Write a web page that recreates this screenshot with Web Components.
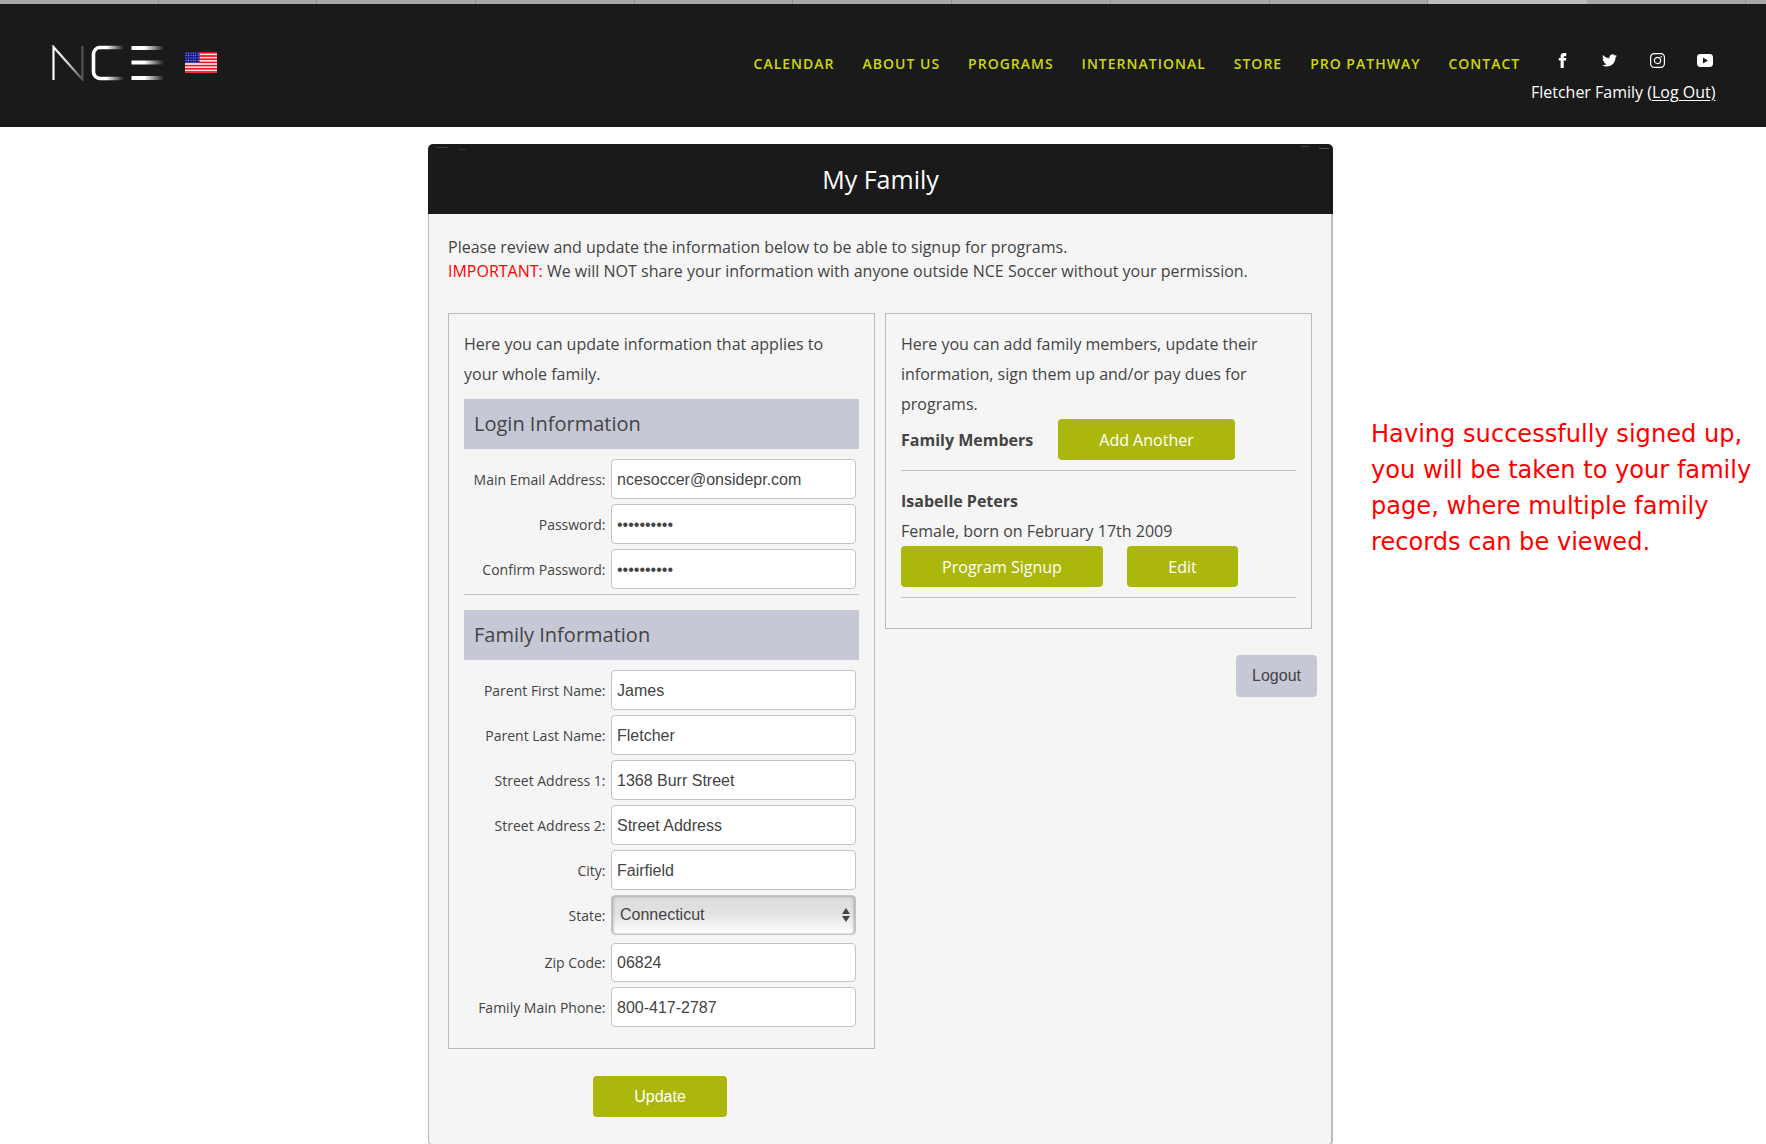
<!DOCTYPE html>
<html lang="en">
<head>
<meta charset="utf-8">
<title>My Family</title>
<style>
    html, body { margin: 0; padding: 0; background: #fff; overflow: hidden; height: 1144px; }
    body { font-family: "Open Sans", "Liberation Sans", sans-serif; color: #444; }
    span b { font-weight: 400; color: #f00; }
</style>
</head>
<body>
<tab-strip></tab-strip>
<site-header>
    <nav-link>CALENDAR</nav-link>
    <nav-link>ABOUT US</nav-link>
    <nav-link>PROGRAMS</nav-link>
    <nav-link>INTERNATIONAL</nav-link>
    <nav-link>STORE</nav-link>
    <nav-link>PRO PATHWAY</nav-link>
    <nav-link>CONTACT</nav-link>
</site-header>
<page-body>
    <family-panel title="My Family">
        <span slot="intro">Please review and update the information below to be able to signup for programs.<br><b>IMPORTANT:</b> We will NOT share your information with anyone outside NCE Soccer without your permission.</span>
        <info-box slot="left">
            <box-text>Here you can update information that applies to your whole family.</box-text>
            <section-title>Login Information</section-title>
            <form-row label="Main Email Address:">ncesoccer@onsidepr.com</form-row>
            <form-row label="Password:">••••••••••</form-row>
            <form-row label="Confirm Password:">••••••••••</form-row>
            <box-rule tight></box-rule>
            <section-title second>Family Information</section-title>
            <form-row label="Parent First Name:">James</form-row>
            <form-row label="Parent Last Name:">Fletcher</form-row>
            <form-row label="Street Address 1:">1368 Burr Street</form-row>
            <form-row label="Street Address 2:">Street Address</form-row>
            <form-row label="City:">Fairfield</form-row>
            <form-row label="State:" select>Connecticut</form-row>
            <form-row label="Zip Code:" short>06824</form-row>
            <form-row label="Family Main Phone:" last>800-417-2787</form-row>
        </info-box>
        <action-button slot="left-action" sans>Update</action-button>
        <info-box slot="right" members>
            <box-text>Here you can add family members, update their information, sign them up and/or pay dues for programs.</box-text>
            <member-row>
                <strong slot="name">Family Members</strong>
                <action-button style="width:177px;margin-left:25px">Add Another</action-button>
            </member-row>
            <box-rule></box-rule>
            <member-card name="Isabelle Peters" details="Female, born on February 17th 2009">
                <action-button style="width:202px">Program Signup</action-button>
                <action-button style="width:111px;margin-left:24px">Edit</action-button>
            </member-card>
            <box-rule></box-rule>
        </info-box>
        <action-button slot="right-action" grey sans>Logout</action-button>
    </family-panel>
    <side-note>Having successfully signed up, you will be taken to your family page, where multiple family records can be viewed.</side-note>
</page-body>

<script>
class TabStrip extends HTMLElement {
    constructor() {
        super();
        this.attachShadow({ mode: 'open' });
        const tabs = Array.from({ length: 11 }, (_, i) => `<i class="${i === 9 ? 'on' : ''}"></i>`).join('');
        this.shadowRoot.innerHTML = `
            <style>
                :host { display: flex; height: 4px; background: #a8a8a8; overflow: hidden; }
                i { flex: 0 0 158.7px; box-sizing: border-box; border-right: 1px solid #8e8e8e; }
                i:first-child { flex-basis: 154.3px; }
                i.on { background: #bdbdbd; border-right: 0; }
            </style>
            ${tabs}
        `;
    }
}

class SiteHeader extends HTMLElement {
    constructor() {
        super();
        this.attachShadow({ mode: 'open' });
        this.shadowRoot.innerHTML = `
            <style>
                :host { display: flex; justify-content: space-between; box-sizing: border-box; height: 123px; padding: 40px 37px 0 52px; background: #1a1a1a; color: #fff; }
                .brand { display: flex; align-items: flex-start; gap: 20px; padding-top: 1px; }
                .flag { margin-top: 7px; }
                .right { display: flex; flex-direction: column; align-items: flex-end; }
                .top { display: flex; height: 32px; align-items: center; }
                nav { display: flex; gap: 28px; padding-top: 8px; margin-right: 18px; }
                .social { display: flex; }
                .social span { display: flex; width: 47.7px; height: 32px; align-items: center; justify-content: center; }
                svg { display: block; }
                .user { margin: 4px 13.5px 0 0; font-size: 16px; line-height: 24px; }
                u { text-underline-offset: 2px; }
            </style>
            <div class="brand">
                <svg width="113" height="36" viewBox="0 0 113 36" role="img" aria-label="NCE logo">
                    <defs>
                        <linearGradient id="n" gradientUnits="userSpaceOnUse" x1="0" x2="32" y1="0" y2="0">
                            <stop offset="0" stop-color="#fff"/><stop offset="0.45" stop-color="#ddd"/><stop offset="1" stop-color="#444"/>
                        </linearGradient>
                        <linearGradient id="c" gradientUnits="userSpaceOnUse" x1="40" x2="72" y1="0" y2="0">
                            <stop offset="0.45" stop-color="#fff"/><stop offset="1" stop-color="#fff" stop-opacity="0"/>
                        </linearGradient>
                        <linearGradient id="e" gradientUnits="userSpaceOnUse" x1="79" x2="112" y1="0" y2="0">
                            <stop offset="0.4" stop-color="#fff"/><stop offset="1" stop-color="#fff" stop-opacity="0"/>
                        </linearGradient>
                    </defs>
                    <path d="M1.5 35V2L30.5 34.5V1" fill="none" stroke="url(#n)" stroke-width="2.2"/>
                    <path d="M72 2.5H48a6.5 6.5 0 0 0-6.5 6.5V27a6.5 6.5 0 0 0 6.5 6.5H72" fill="none" stroke="url(#c)" stroke-width="3.6"/>
                    <rect x="79.5" y="1" width="32.5" height="4" fill="url(#e)"/>
                    <rect x="79.5" y="15.5" width="32.5" height="4" fill="url(#e)"/>
                    <rect x="79.5" y="31" width="32.5" height="4" fill="url(#e)"/>
                </svg>
                <svg class="flag" width="32" height="21" viewBox="0 0 32 21" role="img" aria-label="United States flag">
                    <defs>
                        <pattern id="st" width="32" height="3.2" patternUnits="userSpaceOnUse">
                            <rect width="32" height="1.6" fill="#f01028"/><rect y="1.6" width="32" height="1.6" fill="#ffdfe2"/>
                        </pattern>
                        <pattern id="stars" width="2.4" height="2.4" patternUnits="userSpaceOnUse">
                            <rect width="1.1" height="1.1" x="0.6" y="0.6" fill="#aab0e8"/>
                        </pattern>
                    </defs>
                    <rect width="32" height="21" fill="url(#st)"/>
                    <rect width="14.5" height="11" fill="#10107e"/>
                    <rect width="14.5" height="11" fill="url(#stars)"/>
                </svg>
            </div>
            <div class="right">
                <div class="top">
                    <nav><slot></slot></nav>
                    <div class="social">
                        <span><svg width="15" height="15" viewBox="0 0 24 24" fill="#fff"><path d="M9 8H6v4h3v12h5V12h3.642L18 8h-4V6.333C14 5.378 14.192 5 15.115 5H18V0h-3.808C10.596 0 9 1.583 9 4.615V8z"/></svg></span>
                        <span><svg width="15" height="15" viewBox="0 0 24 24" fill="#fff"><path d="M23.953 4.57a10 10 0 01-2.825.775 4.958 4.958 0 002.163-2.723c-.951.555-2.005.959-3.127 1.184a4.92 4.92 0 00-8.384 4.482C7.69 8.095 4.067 6.13 1.64 3.162a4.822 4.822 0 00-.666 2.475c0 1.71.87 3.213 2.188 4.096a4.904 4.904 0 01-2.228-.616v.06a4.923 4.923 0 003.946 4.827 4.996 4.996 0 01-2.212.085 4.936 4.936 0 004.604 3.417 9.867 9.867 0 01-6.102 2.105c-.39 0-.779-.023-1.17-.067a13.995 13.995 0 007.557 2.209c9.053 0 13.998-7.496 13.998-13.985 0-.21 0-.42-.015-.63A9.935 9.935 0 0024 4.59z"/></svg></span>
                        <span><svg width="15" height="15" viewBox="0 0 15 15" fill="none" stroke="#fff"><rect x="0.6" y="0.6" width="13.8" height="13.8" rx="3.6" stroke-width="1.2"/><circle cx="7.5" cy="7.5" r="3.1" stroke-width="1.2"/><circle cx="11.3" cy="3.7" r="0.8" fill="#fff" stroke="none"/></svg></span>
                        <span><svg width="16" height="13" viewBox="0 0 16 13"><rect width="16" height="13" rx="3.4" fill="#fff"/><path d="M6 3.4V9.6L11 6.5z" fill="#1a1a1a"/></svg></span>
                    </div>
                </div>
                <div class="user">Fletcher Family (<u>Log Out)</u></div>
            </div>
        `;
    }
}

class NavLink extends HTMLElement {
    constructor() {
        super();
        this.attachShadow({ mode: 'open' });
        this.shadowRoot.innerHTML = `
            <style>
                :host { display: block; font-size: 14px; font-weight: 600; letter-spacing: 1px; line-height: 20px; color: #ccd80f; white-space: nowrap; }
            </style>
            <slot></slot>
        `;
    }
}

class PageBody extends HTMLElement {
    constructor() {
        super();
        this.attachShadow({ mode: 'open' });
        this.shadowRoot.innerHTML = `
            <style>
                :host { display: flex; align-items: flex-start; padding: 17px 0 0 428px; }
            </style>
            <slot></slot>
        `;
    }
}

class FamilyPanel extends HTMLElement {
    constructor() {
        super();
        this.attachShadow({ mode: 'open' });
        this.shadowRoot.innerHTML = `
            <style>
                :host { display: block; flex: 0 0 905px; width: 905px; }
                h1 {
                    margin: 0; height: 70px; border-radius: 5px 5px 0 0; color: #fff; font-size: 25px; font-weight: 400; line-height: 70px; text-align: center;
                    background:
                        linear-gradient(#3a3a3a, #3a3a3a) 8px 3px / 12px 1px no-repeat,
                        linear-gradient(#333, #333) 30px 5px / 8px 1px no-repeat,
                        linear-gradient(#555, #555) right 4px top 4px / 10px 1px no-repeat,
                        linear-gradient(#444, #444) right 24px top 2px / 8px 1px no-repeat,
                        #1a1a1a;
                }
                .main { box-sizing: border-box; background: #f5f5f5; border: solid #bbb; border-width: 0 2px 2px 1px; border-radius: 0 0 5px 5px; }
                .intro { padding: 21px 19px 0; font-size: 16px; line-height: 24px; color: #444; }
                ::slotted(span) { display: block; }
                .cols { display: grid; grid-template-columns: 427px 427px; gap: 10px; padding: 30px 0 27px 19px; }
                .col { display: flex; flex-direction: column; }
                .left-action { display: flex; justify-content: center; margin: 27px 0 0 -3px; }
                .right-action { display: flex; justify-content: flex-end; margin: 26px -5px 0 0; }
            </style>
            <h1></h1>
            <div class="main">
                <div class="intro"><slot name="intro"></slot></div>
                <div class="cols">
                    <div class="col">
                        <slot name="left"></slot>
                        <div class="left-action"><slot name="left-action"></slot></div>
                    </div>
                    <div class="col">
                        <slot name="right"></slot>
                        <div class="right-action"><slot name="right-action"></slot></div>
                    </div>
                </div>
            </div>
        `;
        this.shadowRoot.querySelector('h1').textContent = this.getAttribute('title');
    }
}

class InfoBox extends HTMLElement {
    constructor() {
        super();
        this.attachShadow({ mode: 'open' });
        this.shadowRoot.innerHTML = `
            <style>
                :host { display: block; box-sizing: border-box; padding: 15px 15px 21px; border: 1px solid #bbb; }
                :host([members]) { padding-bottom: 30px; }
            </style>
            <slot></slot>
        `;
    }
}

class BoxText extends HTMLElement {
    constructor() {
        super();
        this.attachShadow({ mode: 'open' });
        this.shadowRoot.innerHTML = `
            <style>
                :host { display: block; font-size: 16px; line-height: 30px; color: #444; }
            </style>
            <slot></slot>
        `;
    }
}

class SectionTitle extends HTMLElement {
    constructor() {
        super();
        this.attachShadow({ mode: 'open' });
        this.shadowRoot.innerHTML = `
            <style>
                :host { display: block; height: 50px; margin: 10px 0; padding-left: 10px; background: #c6c8d6; font-size: 20px; line-height: 50px; color: #444; }
                :host([second]) { margin-top: 15px; }
            </style>
            <slot></slot>
        `;
    }
}

class FormRow extends HTMLElement {
    constructor() {
        super();
        this.attachShadow({ mode: 'open' });
        this.shadowRoot.innerHTML = `
            <style>
                :host { display: flex; align-items: center; margin-bottom: 5px; }
                :host([select]) { margin-bottom: 8px; }
                :host([last]) { margin-bottom: 0; }
                label { flex: 0 0 146.5px; padding-right: 5px; box-sizing: border-box; text-align: right; font-size: 14px; color: #444; white-space: nowrap; }
                .box { box-sizing: border-box; width: 245px; height: 40px; padding: 0 5.5px; border: 1px solid #c4c4c4; border-radius: 4px; background: #fff; font: 16px/39px "Liberation Sans", Arial, sans-serif; color: #444; }
                :host([short]) .box { height: 39px; line-height: 38px; }
                :host([select]) .box { position: relative; padding-left: 8.5px; line-height: 38px; background: linear-gradient(#dcdcdc, #e2e2e2 45%, #fff); box-shadow: inset 2px 0 3px -1px #aaa, inset -2px 0 3px -1px #aaa, inset 0 1px 2px #bbb; }
                .arrows { position: absolute; right: 5px; top: 12px; display: none; }
                :host([select]) .arrows { display: block; }
            </style>
            <label></label>
            <div class="box"><slot></slot><svg class="arrows" width="8" height="14" viewBox="0 0 8 14" fill="#444"><path d="M4 0L8 6H0zM4 14L0 8H8z"/></svg></div>
        `;
        this.shadowRoot.querySelector('label').textContent = this.getAttribute('label');
    }
}

class BoxRule extends HTMLElement {
    constructor() {
        super();
        this.attachShadow({ mode: 'open' });
        this.shadowRoot.innerHTML = `
            <style>
                :host { display: block; height: 1px; margin-top: 10px; background: #c4c4c4; }
                :host([tight]) { margin-top: 0; }
            </style>
        `;
    }
}

class MemberRow extends HTMLElement {
    constructor() {
        super();
        this.attachShadow({ mode: 'open' });
        this.shadowRoot.innerHTML = `
            <style>
                :host { display: flex; align-items: center; }
                ::slotted(strong) { font-size: 16px; font-weight: 700; color: #444; white-space: nowrap; width: 132px; }
            </style>
            <slot name="name"></slot>
            <slot></slot>
        `;
    }
}

class MemberCard extends HTMLElement {
    constructor() {
        super();
        this.attachShadow({ mode: 'open' });
        this.shadowRoot.innerHTML = `
            <style>
                :host { display: block; padding-top: 15px; font-size: 16px; line-height: 30px; color: #444; }
                b { display: block; }
                .acts { display: flex; }
            </style>
            <b></b>
            <div class="details"></div>
            <div class="acts"><slot></slot></div>
        `;
        this.shadowRoot.querySelector('b').textContent = this.getAttribute('name');
        this.shadowRoot.querySelector('.details').textContent = this.getAttribute('details');
    }
}

class ActionButton extends HTMLElement {
    constructor() {
        super();
        this.attachShadow({ mode: 'open' });
        this.shadowRoot.innerHTML = `
            <style>
                :host { display: block; box-sizing: border-box; height: 41px; border-radius: 4px; background: #abb80b; color: #fff; font-size: 16px; line-height: 42px; text-align: center; white-space: nowrap; }
                :host([sans]) { font-family: "Liberation Sans", Arial, sans-serif; width: 134px; line-height: 41px; }
                :host([grey]) { width: 81px; height: 42px; line-height: 42px; background: #c6c8d6; color: #444; }
            </style>
            <slot></slot>
        `;
    }
}

class SideNote extends HTMLElement {
    constructor() {
        super();
        this.attachShadow({ mode: 'open' });
        this.shadowRoot.innerHTML = `
            <style>
                :host { display: block; flex: 0 0 392px; margin: 272px 0 0 38px; font-family: "DejaVu Sans", Verdana, sans-serif; font-size: 24.1px; line-height: 36px; color: #f00; }
            </style>
            <slot></slot>
        `;
    }
}

customElements.define('tab-strip', TabStrip);
customElements.define('site-header', SiteHeader);
customElements.define('nav-link', NavLink);
customElements.define('page-body', PageBody);
customElements.define('family-panel', FamilyPanel);
customElements.define('info-box', InfoBox);
customElements.define('box-text', BoxText);
customElements.define('section-title', SectionTitle);
customElements.define('form-row', FormRow);
customElements.define('box-rule', BoxRule);
customElements.define('member-row', MemberRow);
customElements.define('member-card', MemberCard);
customElements.define('action-button', ActionButton);
customElements.define('side-note', SideNote);
</script>
</body>
</html>
